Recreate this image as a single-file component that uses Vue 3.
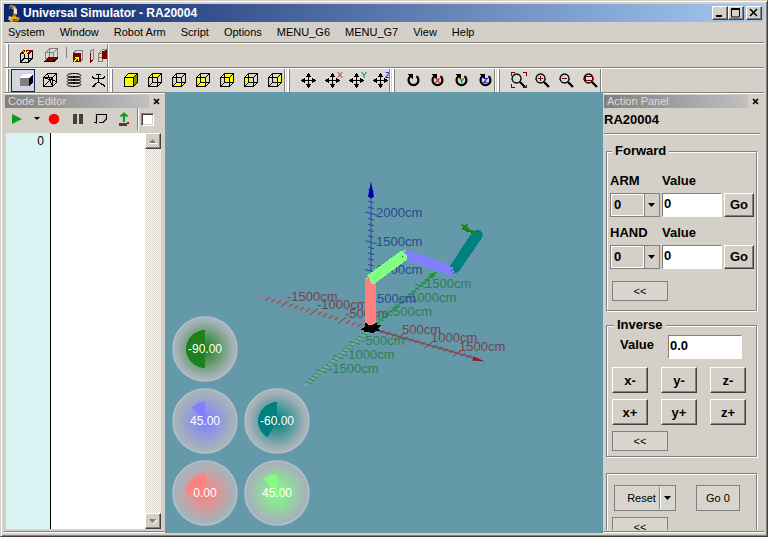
<script setup>
import { ref } from 'vue'

const menus = ['System', 'Window', 'Robot Arm', 'Script', 'Options', 'MENU_G6', 'MENU_G7', 'View', 'Help']

const INK = '#000'
const RED = '#7d0000'
const YEL = '#ffff00'
const GRY = '#808080'

// Unfolded wireframe of a cube in a 24x24 box
const WIRE = 'M5.5 9.5h9v9h-9zM9.5 5.5h9v9h-9zM5.5 9.5l4-4M14.5 9.5l4-4M5.5 18.5l4-4M14.5 18.5l4-4'
const faces = {
  top: 'M5.5 9.5l4-4h9l-4 4z',
  bottom: 'M5.5 18.5l4-4h9l-4 4z',
  front: 'M5.5 9.5h9v9h-9z',
  back: 'M9.5 5.5h9v9h-9z',
  left: 'M5.5 9.5l4-4v9l-4 4z',
  right: 'M14.5 9.5l4-4v9l-4 4z',
}
const line = (d, stroke = INK, w = 1) => ({ d, stroke, fill: 'none', w })
const area = (d, fill, stroke = 'none') => ({ d, stroke, fill, w: 1 })
const cube = (name, face) => ({ name, shapes: [area(faces[face], YEL), line(WIRE)] })

const MOVE = [
  line('M5 12.5h15M12.5 5v14', INK),
  area('M12.5 5l3 4h-6zM12.5 20l3-4h-6zM5 12.5l4-3v6zM20 12.5l-4-3v6z', INK),
]
const TURN = [
  { ...line('M15.5 8.2A5 5 0 1 1 9.5 8.2', INK, 2.2), smooth: true },
  area('M6 6h6v6z', INK),
]
const LENS = [
  { ...line('M10.5 6a4.5 4.5 0 1 0 .1 0z', INK, 1.3), smooth: true },
  { ...line('M8 9.5a3.4 3.4 0 0 1 3-2.4', '#7fe0e0', 1), smooth: true },
  { ...line('M14 14l5 5', INK, 2.2), smooth: true },
]

const planes = [
  { name: 'Top plane', shapes: [line('M6.5 11v8h8v-8M10.5 10v5M18.5 8v7l-4 4M6.5 19l4-4h8', INK), area('M5 11l4-4h10l-4 4z', RED), line('M11.5 4v6M9 8l2.5 3 3-3', YEL, 1)] },
  { name: 'Base plane', shapes: [line('M7.5 9.5h8v6h-8zM7.5 9.5l4-4h8l-4 4M19.5 5.5v9M11.5 5.5v9', GRY), area('M6 18l4-4h10l-4 4z', RED), line('M6 18.5h10l4-4', INK)] },
  { name: 'Front plane', shapes: [line('M4.5 4v11', GRY), line('M11.5 10l3-3h6v9l-3 3', GRY), area('M11 10h8v9h-8z', RED), line('M12 18.5l4-4M13 14.5h3.5v3.5', YEL)] },
  { name: 'Side plane', shapes: [line('M4.5 7.5l3-1v9l-3 3z', GRY), line('M4.5 10v9l2-2', RED), line('M12.5 10.5h4v8h-4zM12.5 10.5l4-4h5M12.5 14.5h4', GRY), area('M16 8l5-1v9h-5z', RED)] },
]

const bands = [
  {
    name: 'Display',
    tools: [
      { name: 'Shaded', pressed: true, shapes: [area('M8 10h9v8h-9z', GRY), area('M8 10l3-4h10l-4 4z', '#fff'), area('M17 10l4-4v9l-4 3z', INK)] },
      { name: 'Wireframe', shapes: [line('M5.5 9.5h9v9h-9zM5.5 9.5l4-4h9v9l-4 4M14.5 9.5l4-4M5.5 18.5l13-13M9.5 5.5l5 13M5.5 9.5l13 4')] },
      { name: 'Rings', shapes: [5.5, 8.5, 11.5, 14.5].map((y) => ({ ...line(`M12 ${y}c9 0 9 4 0 4s-9-4 0-4z`), smooth: true })) },
      { name: 'Skeleton', shapes: [line('M10 6.5h5M12.5 6v8M6 8.500l2 2h9l2-2M12.500 14l-3 2-3 3M12.500 14l3 2h2l1 3M6 18.500h3')] },
    ],
  },
  {
    name: 'Views',
    tools: [
      { name: 'Solid view', shapes: [area(faces.front, YEL), area(faces.top, YEL), area(faces.right, '#8a8a00'), line('M5.5 9.5h9v9h-9zM5.5 9.5l4-4h9v9l-4 4M14.5 9.5l4-4')] },
      cube('Top view', 'top'),
      cube('Bottom view', 'bottom'),
      cube('Front view', 'front'),
      cube('Back view', 'back'),
      cube('Left view', 'left'),
      cube('Right view', 'right'),
    ],
  },
  {
    name: 'Move',
    tools: [
      { name: 'Move', shapes: MOVE },
      { name: 'Move X', shapes: MOVE, mark: 'X', color: '#e02020', corner: true },
      { name: 'Move Y', shapes: MOVE, mark: 'Y', color: '#108010', corner: true },
      { name: 'Move Z', shapes: MOVE, mark: 'Z', color: '#0000c8', corner: true },
    ],
  },
  {
    name: 'Rotate',
    tools: [
      { name: 'Rotate', shapes: TURN },
      { name: 'Rotate X', shapes: TURN, mark: 'X', color: '#e00000' },
      { name: 'Rotate Y', shapes: TURN, mark: 'Y', color: '#108010' },
      { name: 'Rotate Z', shapes: TURN, mark: 'Z', color: '#0000c8' },
    ],
  },
  {
    name: 'Zoom',
    tools: [
      { name: 'Zoom all', shapes: [...LENS, line('M5.500 8v-3.500h3M17 4.500h3v3.500M5.500 16v3.500h3M17 19.500h3v-3', RED)] },
      { name: 'Zoom in', shapes: [...LENS, line('M8 10.500h5M10.500 8v5', RED)] },
      { name: 'Zoom out', shapes: [...LENS, line('M8 10.500h5', RED)] },
      { name: 'Zoom window', shapes: [...LENS, line('M7.500 8.500h7v4h-7z', RED)] },
    ],
  },
]

// World axes, relative to the base of the robot
function ticks(dx, dy, tx, ty, from, to) {
  let d = ''
  for (let i = from; i <= to; i++) {
    if (i === 0) continue
    const k = i % 5 === 0 ? 2 : 1
    const x = dx * i
    const y = dy * i
    d += `M${(x - tx * k).toFixed(1)} ${(y - ty * k).toFixed(1)}L${(x + tx * k).toFixed(1)} ${(y + ty * k).toFixed(1)}`
  }
  return d
}
const axes = [
  {
    id: 'x', color: '#74434c', far: 'M-114 -33L0 0', near: 'M0 0L105 30', nearColor: '#8a4a54',
    ticks: ticks(5.75, 1.65, 2, -1.6, -18, 17), head: 'M114 33L101 32 103 28z', headFill: '#a01818', glow: '#96828a',
    labels: [['-1500cm', -84, -28], ['-1000cm', -54, -20], ['-500cm', -26, -11], ['500cm', 31, 5], ['1000cm', 60, 13], ['1500cm', 88, 22]],
  },
  {
    id: 'y', color: '#2c8050', far: 'M-66 57L0 0', near: 'M0 0L60 -52', nearColor: '#20a048',
    ticks: ticks(3.3, -2.85, 2.5, 0.8, -19, 18), head: 'M66 -57L62 -50 58 -54z', headFill: '#10a020', glow: '#76b496',
    labels: [['1500cm', 54, -41], ['1000cm', 39, -27], ['500cm', 22, -13], ['-500cm', -10, 16], ['-1000cm', -27, 30], ['-1500cm', -43, 44]],
  },
  {
    id: 'z', color: '#264b91', far: 'M0 0V-50', near: 'M0 -50V-135', nearColor: '#4060b8',
    ticks: ticks(0, -5.75, 3, 0.8, 1, 24), head: 'M0 -147L3 -132 0 -130 -3 -132z', headFill: '#0000b0', glow: '#4060b8',
    labels: [['2000cm', 5, -112], ['1500cm', 5, -83], ['1000cm', 5, -55], ['500cm', 6, -26]],
  },
]

const gauges = [
  { id: 'wrist', value: -90, color: '#1d801d', wide: true },
  { id: 'elbow', value: 45, color: '#8080ff' },
  { id: 'fore', value: -60, color: '#008080' },
  { id: 'base', value: 0, color: '#ff8080' },
  { id: 'shoulder', value: 45, color: '#80ff80' },
]
function sector(value) {
  const sweep = ((90 - value) * Math.PI) / 180
  const x = 32 - 19 * Math.sin(sweep)
  const y = 32 - 19 * Math.cos(sweep)
  return `M32 32V13A19 19 0 0 0 ${x.toFixed(2)} ${y.toFixed(2)}z`
}

const forward = ref([
  { id: 'arm', label: 'ARM', joint: '0', value: '0' },
  { id: 'hand', label: 'HAND', joint: '0', value: '0' },
])
const inverse = ref('0.0')
const steps = ['x-', 'y-', 'z-', 'x+', 'y+', 'z+']
</script>

<template>
  <div class="window">
    <header class="titlebar">
      <svg class="logo" width="16" height="18" viewBox="0 0 16 18" aria-hidden="true">
        <path d="M4 1l5 1 2 4-2 4-2-1 1-3-3-2-2 1z" fill="#b8a860" />
        <path d="M8 4l3 1v5l-3 2z" fill="#e8e4d0" />
        <path d="M3 2l4 1-2 2z" fill="#504820" />
        <path d="M7 9l3 1v3l-4 1z" fill="#907028" />
        <path d="M3 14l5-2 6 2-2 3-8 1z" fill="#e8a820" />
        <path d="M3 12l3 1-1 2-3 1z" fill="#d8c898" />
        <path d="M7 15l5 0-1 1-4 1z" fill="#704808" />
      </svg>
      <h1>Universal Simulator - RA20004</h1>
      <div class="caption-buttons">
        <button aria-label="Minimize"><svg width="12" height="10" viewBox="0 0 12 10"><path d="M2 8h6" stroke="#000" stroke-width="2" /></svg></button>
        <button aria-label="Maximize"><svg width="12" height="10" viewBox="0 0 12 10"><path d="M1.500 1v8h8V1zM1 1h9" fill="none" stroke="#000" /><path d="M1 1h9" stroke="#000" stroke-width="2" /></svg></button>
        <button class="close" aria-label="Close"><svg width="12" height="10" viewBox="0 0 12 10"><path d="M2 1l7 7M9 1L2 8" stroke="#000" stroke-width="1.600" /></svg></button>
      </div>
    </header>

    <nav class="menubar">
      <button v-for="m in menus" :key="m">{{ m }}</button>
    </nav>

    <div class="toolrow first">
      <div class="band">
        <i class="grip start"></i>
        <button v-for="t in planes" :key="t.name" class="tool" :aria-label="t.name">
          <svg width="24" height="23" viewBox="0 1 24 23" shape-rendering="crispEdges">
            <path v-for="(s, i) in t.shapes" :key="i" :d="s.d" :fill="s.fill" :stroke="s.stroke" :stroke-width="s.w" />
          </svg>
        </button>
      </div>
    </div>

    <div class="toolrow second">
      <div v-for="(b, n) in bands" :key="b.name" class="band">
        <i class="grip" :class="{ start: n === 0 }"></i>
        <button v-for="t in b.tools" :key="t.name" class="tool" :class="{ pressed: t.pressed }" :aria-label="t.name">
          <svg width="24" height="23" viewBox="0 1 24 23">
            <path
              v-for="(s, i) in t.shapes" :key="i" :d="s.d" :fill="s.fill" :stroke="s.stroke" :stroke-width="s.w"
              :shape-rendering="s.smooth ? 'auto' : 'crispEdges'"
            />
            <text v-if="t.mark" class="mark" :class="{ bold: !t.corner }" :x="t.corner ? 17 : 10" :y="t.corner ? 10 : 15" :fill="t.color">{{ t.mark }}</text>
          </svg>
        </button>
      </div>
    </div>

    <main class="workspace">
      <section class="panel code">
        <div class="panel-title">
          <h2>Code Editor</h2>
          <button aria-label="Close code editor"><svg width="7" height="7" viewBox="0 0 7 7"><path d="M1 1l5 5M6 1L1 6" stroke="#000" stroke-width="1.700" /></svg></button>
        </div>
        <div class="code-tools">
          <button aria-label="Run"><svg width="12" height="12" viewBox="0 0 12 12"><path d="M1 1l10 5-10 5z" fill="#08a018" /></svg></button>
          <button class="drop" aria-label="Run options"><svg width="6" height="4" viewBox="0 0 6 4"><path d="M0 0h6L3 3z" /></svg></button>
          <button aria-label="Record"><svg width="12" height="12" viewBox="0 0 12 12"><circle cx="6" cy="6" r="5.300" fill="#f00" /></svg></button>
          <button aria-label="Pause"><svg width="12" height="12" viewBox="0 0 12 12"><path d="M1 1h4v10H1zM7 1h4v10H7z" fill="#404040" /></svg></button>
          <button aria-label="Step"><svg width="14" height="12" viewBox="0 0 14 12"><path d="M3.500 9V1.500h10V6L10 9.500H6M1 9.500h3" fill="none" stroke="#000" stroke-width="1.200" /><path d="M2 9.500l2-1.500v3z" /></svg></button>
          <button class="wide" aria-label="Upload"><svg width="12" height="14" viewBox="0 0 12 14"><path d="M6 2v8M2.500 4.500L6 1.500l3.500 3" stroke="#08a018" stroke-width="2" fill="none" /><path d="M1 11h8v3H1z" fill="#404040" /><path d="M9 10h2v2H9z" fill="#d00" /></svg></button>
          <input type="checkbox" aria-label="Loop script" />
        </div>
        <div class="editor">
          <div class="gutter">0</div>
          <textarea aria-label="Script" spellcheck="false"></textarea>
          <div class="scrollbar">
            <button aria-label="Scroll up"><svg width="8" height="5" viewBox="0 0 8 5"><path d="M0 4h7L3.500 0z" fill="#808080" /><path d="M0 4.500h8" stroke="#fff" /></svg></button>
            <button aria-label="Scroll down"><svg width="8" height="5" viewBox="0 0 8 5"><path d="M4 5l4-4" stroke="#fff" /><path d="M0 0h7L3.500 4z" fill="#808080" /></svg></button>
          </div>
        </div>
      </section>

      <section class="viewport">
        <svg class="scene" viewBox="0 0 438 440" preserveAspectRatio="xMidYMid meet" role="img" aria-label="Robot arm scene">
          <g transform="translate(206 236)">
            <g v-for="a in axes" :key="a.id">
              <path :d="a.far" :stroke="a.glow" stroke-width="2" fill="none" />
              <path :d="a.near" :stroke="a.nearColor" stroke-width="1.500" fill="none" />
              <path :d="a.ticks" :stroke="a.color" fill="none" />
              <path :d="a.head" :fill="a.headFill" />
              <text v-for="l in a.labels" :key="l[0]" :x="l[1]" :y="l[2]" :fill="a.color">{{ l[0] }}</text>
            </g>
            <g shape-rendering="crispEdges">
              <path d="M-6 -6L5 -6 7 -3 11 -4 7 0 9 2 4 3 1 5 -4 3 -8 4 -6 1 -10 1 -6 -2z" fill="#000" />
              <path d="M-6 -50L-3 -52 5 -48V-6L2 -4H-3L-6 -6z" fill="#ff8080" />
              <path d="M-4 -53L29 -77 33 -78 36 -74 36 -69 4 -45 0 -45 -1 -50z" fill="#80ff80" />
              <path d="M31 -78H37L82 -63 84 -60 83 -54 78 -53 74 -55 36 -68V-73z" fill="#8080ff" />
              <path d="M78 -61L101 -96 105 -99 109 -99 112 -94 111 -91 88 -57 83 -55 82 -62z" fill="#008080" />
              <path d="M35 -78l-4 1 4 3M0 -47h2M-5 -50h2" stroke="#80ff80" fill="none" />
              <path d="M31 -72h1M80 -58h1M81 -55h1" stroke="#205020" fill="none" />
              <path d="M89 -106l4 3 4-2-1 3 3 3 10 4-2 1-10-3-2 1-1-3-4 1 2-3z" fill="#1d801d" />
            </g>
          </g>
        </svg>
        <div class="gauges">
          <svg v-for="g in gauges" :key="g.id" :class="{ wide: g.wide }" width="66" height="66" viewBox="-1 -1 66 66">
            <defs>
              <radialGradient :id="'glow-' + g.id">
                <stop offset="0" :stop-color="g.color" />
                <stop offset="0.2" :stop-color="g.color" stop-opacity="0.8" />
                <stop offset="0.9" :stop-color="g.color" stop-opacity="0" />
              </radialGradient>
            </defs>
            <circle cx="32" cy="32" r="32" fill="#a6b3b9" />
            <circle cx="32" cy="32" r="32" :fill="`url(#glow-${g.id})`" stroke="#b3c0cb" stroke-width="1.500" />
            <path :d="sector(g.value)" :fill="g.color" shape-rendering="crispEdges" />
            <text x="32" y="36" text-anchor="middle" fill="#fff">{{ g.value.toFixed(2) }}</text>
          </svg>
        </div>
      </section>

      <section class="panel action">
        <div class="panel-title">
          <h2>Action Panel</h2>
          <button aria-label="Close action panel"><svg width="7" height="7" viewBox="0 0 7 7"><path d="M1 1l5 5M6 1L1 6" stroke="#000" stroke-width="1.700" /></svg></button>
        </div>
        <h3>RA20004</h3>
        <div class="groups">
          <fieldset>
            <legend>Forward</legend>
            <div class="forward">
              <template v-for="f in forward" :key="f.id">
                <label :for="f.id + '-joint'">{{ f.label }}</label>
                <label class="span" :for="f.id + '-value'">Value</label>
                <div class="combo">
                  <select :id="f.id + '-joint'" v-model="f.joint"><option>0</option></select>
                  <svg width="7" height="4" viewBox="0 0 7 4"><path d="M0 0h7L3.500 4z" /></svg>
                </div>
                <input :id="f.id + '-value'" v-model="f.value" type="text" />
                <button class="raised">Go</button>
              </template>
            </div>
            <button class="flat back">&lt;&lt;</button>
          </fieldset>

          <fieldset class="inverse">
            <legend>Inverse</legend>
            <div class="field">
              <label for="inverse-value">Value</label>
              <input id="inverse-value" v-model="inverse" type="text" />
            </div>
            <div class="steps">
              <button v-for="s in steps" :key="s" class="raised">{{ s }}</button>
            </div>
            <button class="flat back">&lt;&lt;</button>
          </fieldset>

          <fieldset class="reset">
            <div class="actions">
              <button class="flat split">Reset<i></i><svg width="7" height="4" viewBox="0 0 7 4"><path d="M0 0h7L3.500 4z" /></svg></button>
              <button class="flat zero">Go 0</button>
            </div>
            <button class="flat back">&lt;&lt;</button>
          </fieldset>
        </div>
      </section>
    </main>
  </div>
</template>

<style>
body {
  margin: 0;
  background: #d4d0c8;
}
</style>

<style scoped>
* {
  box-sizing: border-box;
}
.window {
  display: flex;
  flex-direction: column;
  height: 100vh;
  padding: 3px;
  border: 1px solid;
  border-color: #d4d0c8 #404040 #404040 #d4d0c8;
  box-shadow: inset 1px 1px #fff, inset -1px -1px #808080;
  background: #d4d0c8;
  color: #000;
  font: 11px "Liberation Sans", Arial, sans-serif;
  overflow: hidden;
}
button {
  margin: 0;
  padding: 0;
  border: 0;
  background: none;
  color: inherit;
  font: inherit;
  display: flex;
  align-items: center;
  justify-content: center;
}
svg {
  display: block;
  flex: none;
}
h1, h2, h3 {
  margin: 0;
}

.titlebar {
  flex: none;
  display: flex;
  align-items: center;
  gap: 1px;
  height: 18px;
  padding: 0 2px;
  background: linear-gradient(90deg, #0a246a, #a6caf0);
}
.titlebar h1 {
  flex: 1;
  color: #fff;
  font-size: 12px;
  line-height: 18px;
}
.caption-buttons {
  display: flex;
}
.caption-buttons button {
  width: 16px;
  height: 14px;
}
.caption-buttons .close {
  margin-left: 2px;
}
.caption-buttons button,
.scrollbar button {
  background: #d4d0c8;
  border: 1px solid;
  border-color: #fff #404040 #404040 #fff;
  box-shadow: inset -1px -1px #808080;
}

.menubar {
  flex: none;
  display: flex;
  height: 20px;
  gap: 15px;
  padding-left: 4px;
}

.toolrow {
  flex: none;
  display: flex;
  height: 25px;
  border-top: 1px solid #808080;
  box-shadow: inset 0 1px #fff;
  padding-top: 1px;
}
.band {
  display: flex;
  background: #dbd8d2;
}
.grip {
  flex: none;
  width: 12px;
  margin-left: -3px;
  background: linear-gradient(90deg, #808080 1px, #fff 1px 2px, #d4d0c8 2px 3px, #fff 3px 5px, #808080 5px 6px, transparent 6px);
  z-index: 1;
}
.grip.start {
  width: 7px;
  margin-left: 0;
  background: linear-gradient(90deg, #d4d0c8 2px, #fff 2px 4px, #808080 4px 5px, transparent 5px);
}
.first .grip.start {
  width: 10px;
}
.first .band,
.second .band:last-child {
  border-right: 1px solid #808080;
  box-shadow: 1px 0 #fff;
}
.first .band {
  width: 104px;
  overflow: hidden;
}
.tool {
  flex: none;
  width: 24px;
  height: 23px;
}
.second .band:last-child .tool:last-child {
  width: 22px;
  justify-content: flex-start;
}
.tool.pressed {
  margin-right: 3px;
  border: 1px solid #0a246a;
  background: #d2d6e0;
}
.tool.pressed svg {
  margin-left: 2px;
}
.mark {
  font: 9px "Liberation Sans", Arial, sans-serif;
}
.mark.bold {
  font-weight: bold;
  font-size: 8px;
}

.workspace {
  flex: 1;
  min-height: 0;
  display: grid;
  grid-template-columns: 161px minmax(0, 1fr) 161px;
}
.panel {
  display: flex;
  flex-direction: column;
  min-height: 0;
  border-top: 1px solid #808080;
  border-bottom: 1px solid #fff;
  box-shadow: inset 0 1px #fff, inset 0 -1px #808080;
  padding: 2px 0;
}
.panel-title {
  flex: none;
  display: flex;
  height: 13px;
  padding: 0 5px 0 1px;
  justify-content: space-between;
  align-items: center;
}
.panel-title h2 {
  width: 144px;
  padding-left: 3px;
  background: linear-gradient(90deg, #808080, #c0c0c0);
  color: #dedbd5;
  font-size: 11px;
  line-height: 13px;
  font-weight: normal;
}

.code-tools {
  flex: none;
  display: flex;
  align-items: center;
  height: 25px;
  padding: 0 5px 3px 8px;
}
.code-tools button {
  width: 24px;
  height: 22px;
  flex: none;
}
.code-tools button:first-child {
  width: 20px;
  padding-right: 10px;
}
.code-tools .drop {
  width: 10px;
}
.code-tools button:nth-child(5) {
  width: 20px;
}
.code-tools .wide {
  width: 28px;
  border-right: 1px solid #808080;
  box-shadow: 1px 0 #fff;
}
.code-tools input {
  appearance: none;
  flex: none;
  width: 13px;
  height: 13px;
  margin: 0 0 0 3px;
  border: 1px solid;
  border-color: #808080 #fff #fff #808080;
  background: #fff;
  box-shadow: inset 1px 1px #404040, inset -1px -1px #d4d0c8;
}
.editor {
  flex: 1;
  min-height: 0;
  display: flex;
  margin: 0 4px 1px 2px;
  background: #fff;
}
.gutter {
  width: 45px;
  padding: 1px 6px;
  border-right: 1px solid #000;
  background: #daf4f5;
  text-align: right;
  font-size: 12px;
}
.editor textarea {
  flex: 1;
  min-width: 0;
  border: 0;
  padding: 2px;
  outline: none;
  resize: none;
  font: 12px "Liberation Mono", monospace;
}
.scrollbar {
  width: 16px;
  display: flex;
  flex-direction: column;
  justify-content: space-between;
  background: repeating-conic-gradient(#fff 0 25%, #d4d0c8 0 50%) 0 0 / 2px 2px;
}
.scrollbar button {
  height: 16px;
}

.viewport {
  position: relative;
  min-width: 0;
  min-height: 0;
  background: #6499a9;
}
.scene {
  width: 100%;
  height: 100%;
}
.scene text {
  font: 13px "Liberation Sans", Arial, sans-serif;
}
.gauges {
  position: absolute;
  left: 7px;
  bottom: 7px;
  display: grid;
  grid-template-columns: 66px 66px;
  gap: 6px;
}
.gauges .wide {
  grid-column: span 2;
}
.gauges text {
  font: 12px "Liberation Sans", Arial, sans-serif;
}

.action h3 {
  flex: none;
  height: 27px;
  margin: 0 4px 0 1px;
  border-bottom: 1px solid #fff;
  box-shadow: inset 0 -1px #808080;
  font-size: 13px;
  line-height: 24px;
}
.groups {
  flex: 1;
  min-height: 0;
  overflow: hidden;
  padding: 8px 7px 0 3px;
}
fieldset {
  margin: 0 0 6px;
  min-width: 0;
  border: 1px solid #808080;
  box-shadow: inset 1px 1px #fff, 1px 1px #fff;
  padding: 14px 3px 9px;
  font-size: 13px;
  font-weight: bold;
}
legend {
  margin-left: 2px;
  padding: 0 3px;
  background: #d4d0c8;
  line-height: 16px;
}
.forward {
  display: grid;
  grid-template-columns: 50px 60px 30px;
  gap: 4px 2px;
  line-height: 16px;
}
.forward .span {
  grid-column: span 2;
}
.forward .raised,
.forward input,
.combo {
  height: 24px;
  margin-bottom: 4px;
}
.combo {
  display: flex;
  align-items: center;
  border: 1px solid #808080;
  padding-right: 4px;
  background: linear-gradient(#808080, #808080) 33px 0 / 1px 100% no-repeat;
}
.combo select {
  appearance: none;
  width: 33px;
  height: 22px;
  margin-right: 4px;
  padding: 0 2px;
  border: 1px solid #fff;
  border-radius: 0;
  background: transparent;
  color: inherit;
  font: inherit;
}
input[type="text"] {
  min-width: 0;
  width: 100%;
  height: 24px;
  padding: 0 1px 4px;
  border: 1px solid;
  border-color: #808080 #fff #fff #808080;
  border-radius: 0;
  background: #fff;
  color: inherit;
  font: inherit;
}
.raised {
  border: 1px solid;
  border-color: #fff #404040 #404040 #fff;
  box-shadow: inset -1px -1px #808080;
}
.flat {
  border: 1px solid #808080;
  background: #d8d5ce;
  font-size: 11px;
  font-weight: normal;
}
.back {
  width: 56px;
  height: 20px;
  margin: 8px 0 0 2px;
}
.inverse {
  margin-bottom: 16px;
  padding: 2px 5px 5px;
}
.field {
  display: flex;
  align-items: center;
  justify-content: space-between;
  padding: 0 9px 0 8px;
}
.field label {
  line-height: 20px;
  padding-bottom: 4px;
}
.field input[type="text"] {
  width: 74px;
}
.steps {
  display: grid;
  grid-template-columns: repeat(3, 36px);
  gap: 6px 13px;
  margin-top: 8px;
}
.steps .raised {
  height: 26px;
}
.inverse .back {
  margin: 6px 0 0;
}
.reset {
  padding: 11px 5px 9px;
}
.actions {
  display: flex;
  gap: 20px;
  padding-left: 2px;
}
.actions .flat {
  height: 26px;
}
.split {
  width: 62px;
  padding-left: 8px;
  gap: 3px;
}
.split i {
  width: 2px;
  height: 22px;
  background: linear-gradient(90deg, #808080 50%, #fff 50%);
}
.zero {
  width: 44px;
}
.reset .back {
  margin: 6px 0 0;
}
</style>
